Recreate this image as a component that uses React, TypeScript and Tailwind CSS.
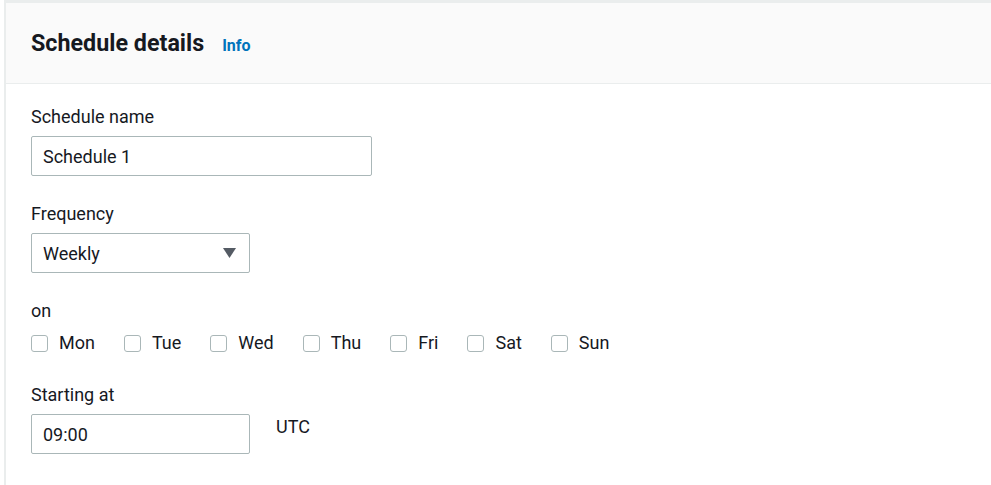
import { useState } from "react";

const DAYS = ["Mon", "Tue", "Wed", "Thu", "Fri", "Sat", "Sun"];

function Field({ label, children }: { label: string; children: React.ReactNode }) {
  return (
    <div className="flex flex-col">
      <label className="mb-2 text-[18px] leading-[22px] text-[#16191f]">{label}</label>
      {children}
    </div>
  );
}

export default function App() {
  const [name, setName] = useState("Schedule 1");
  const [time, setTime] = useState("09:00");
  const [days, setDays] = useState<string[]>([]);

  const toggle = (d: string) =>
    setDays((cur) => (cur.includes(d) ? cur.filter((x) => x !== d) : [...cur, d]));

  return (
    <div
      className="h-[485px] w-full overflow-hidden bg-white pl-[4px]"
      style={{ fontFamily: "Roboto, 'Liberation Sans', sans-serif" }}
    >
      <div className="h-full border-l-2 border-t-[3px] border-[#eaeded]">
        {/* Header */}
        <div className="flex h-[81px] items-baseline gap-[18px] border-b border-[#eaeded] bg-[#fafafa] px-[25px] pt-[26px]">
          <h2 className="text-[23.3px] font-bold leading-[28px] text-[#16191f]">Schedule details</h2>
          <a className="text-[16px] font-bold text-[#0073bb]">Info</a>
        </div>

        {/* Body */}
        <div className="flex flex-col px-[25px] pt-[22px]">
          <Field label="Schedule name">
            <input
              value={name}
              onChange={(e) => setName(e.target.value)}
              className="h-[40px] w-[341px] rounded-[2px] border border-[#aab7b8] px-[11px] text-[18px] text-[#16191f] outline-none"
            />
          </Field>

          <div className="mt-[27px]">
            <Field label="Frequency">
              <button className="flex h-[40px] w-[219px] items-center justify-between rounded-[2px] border border-[#aab7b8] pl-[11px] pr-[13px] text-[18px] text-[#16191f]">
                Weekly
                <svg width="13" height="10" viewBox="0 0 13 10">
                  <path d="M0 0h13L6.5 10z" fill="#545b64" />
                </svg>
              </button>
            </Field>
          </div>

          <div className="mt-[27px] flex flex-col">
            <span className="text-[18px] leading-[22px] text-[#16191f]">on</span>
            <div className="mt-[10px] flex items-center gap-[29px]">
              {DAYS.map((d) => (
                <label key={d} className="flex items-center gap-[11px] text-[18px] leading-[22px] text-[#16191f]">
                  <span
                    onClick={() => toggle(d)}
                    className={`h-[17px] w-[17px] rounded-[3px] border border-[#aab7b8] ${
                      days.includes(d) ? "bg-[#0073bb]" : "bg-white"
                    }`}
                  />
                  {d}
                </label>
              ))}
            </div>
          </div>

          <div className="mt-[30px]">
            <Field label="Starting at">
              <div className="flex items-start">
                <input
                  value={time}
                  onChange={(e) => setTime(e.target.value)}
                  className="h-[40px] w-[219px] rounded-[2px] border border-[#aab7b8] px-[11px] text-[18px] text-[#16191f] outline-none"
                />
                <span className="ml-[26px] mt-[2px] text-[18px] leading-[22px] text-[#16191f]">UTC</span>
              </div>
            </Field>
          </div>
        </div>
      </div>
    </div>
  );
}
